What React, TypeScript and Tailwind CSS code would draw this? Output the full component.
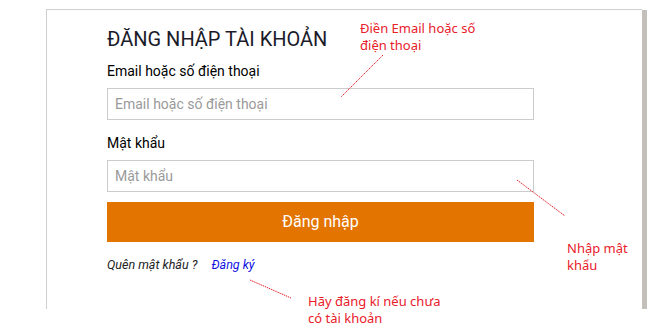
import React from "react";

const annotStyle = "absolute text-[13px] leading-[17px] text-[#e8202a] font-['Noto_Sans',sans-serif]";

export default function App() {
  return (
    <div className="relative w-[653px] h-[331px] overflow-hidden bg-white font-['Roboto',sans-serif]">
      {/* top rule runs across the page */}
      <div className="flex pt-[9px]">
        <div className="ml-[46px] flex">
          {/* Login panel */}
          <div className="w-[596px] h-[300px] border-l border-t border-[#cfcfcf] pl-[60px] pt-[15px]">
            <div className="w-[427px] flex flex-col">
              <h1 className="text-[20px] leading-[28px] font-normal text-[#1b1b2a]">
                ĐĂNG NHẬP TÀI KHOẢN
              </h1>

              <label className="mt-[8px] text-[14px] leading-[20px] text-black">
                Email hoặc số điện thoại
              </label>
              <input
                className="mt-[7px] h-[32px] w-full border border-[#cccccc] px-[7px] text-[14px] outline-none placeholder:text-[#9a9a9a]"
                placeholder="Email hoặc số điện thoại"
              />

              <label className="mt-[13px] text-[14px] leading-[20px] text-black">
                Mật khẩu
              </label>
              <input
                type="password"
                className="mt-[7px] h-[32px] w-full border border-[#cccccc] px-[7px] text-[14px] outline-none placeholder:text-[#9a9a9a]"
                placeholder="Mật khẩu"
              />

              <button className="mt-[10px] h-[40px] w-full bg-[#e37400] text-white text-[16px]">
                Đăng nhập
              </button>

              <div className="mt-[14px] flex text-[12.5px] leading-[18px] italic">
                <span className="text-[#222]">Quên mật khẩu ?</span>
                <a className="ml-[14px] text-[#1010e0]">Đăng ký</a>
              </div>
            </div>
          </div>
          {/* right scrollbar-like strip */}
          <div className="mt-px w-[5px] h-[299px] bg-[#c3c0bb]" />
        </div>
      </div>

      {/* Annotations */}
      <div className={annotStyle + " left-[360px] top-[20px]"}>
        Điền Email hoặc số
        <br />
        điện thoại
      </div>
      <div className={annotStyle + " left-[567px] top-[240px]"}>
        Nhập mật
        <br />
        khẩu
      </div>
      <div className={annotStyle + " left-[308px] top-[293px]"}>
        Hãy đăng kí nếu chưa
        <br />
        có tài khoản
      </div>

      <svg className="absolute left-0 top-0 pointer-events-none" width="653" height="331">
        <g stroke="#e8202a" strokeWidth="1" strokeDasharray="1.5 0.8">
          <line x1="383" y1="55" x2="341" y2="97" />
          <line x1="517" y1="180" x2="565" y2="216" />
          <line x1="250" y1="280" x2="291" y2="298" />
        </g>
      </svg>
    </div>
  );
}
